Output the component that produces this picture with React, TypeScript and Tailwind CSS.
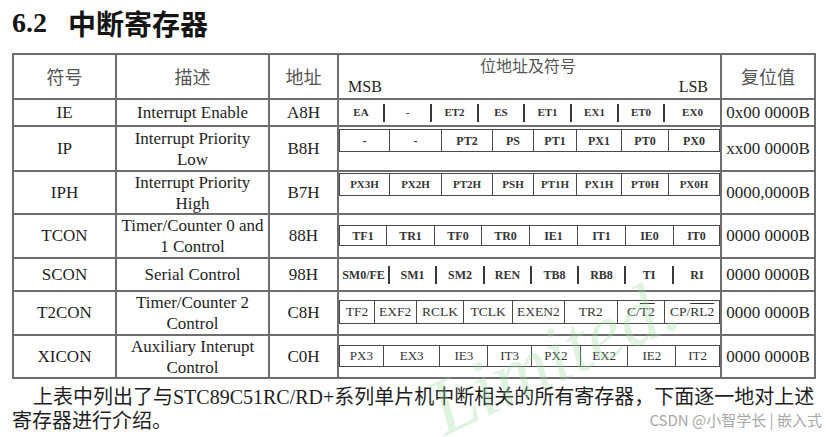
import React from 'react';

const serif = "font-['Liberation_Serif','Noto_Sans_CJK_SC',serif]";
const cjk = "font-['Noto_Sans_CJK_SC',sans-serif]";

type Bit = [React.ReactNode, number];

interface RegRow {
  sym: string;
  desc: string[];
  addr: string;
  reset: string;
  kind: 'bar' | 'box';
  bits: Bit[];
  text: string;
  box?: string;
}

const rows: RegRow[] = [
  {
    sym: 'IE',
    desc: ['Interrupt Enable'],
    addr: 'A8H',
    reset: '0x00 0000B',
    kind: 'bar',
    text: 'text-[11px] font-bold',
    bits: [['EA', 44], ['-', 47], ['ET2', 47], ['ES', 46], ['ET1', 47], ['EX1', 47], ['ET0', 46], ['EX0', 57]],
  },
  {
    sym: 'IP',
    desc: ['Interrupt Priority', 'Low'],
    addr: 'B8H',
    reset: 'xx00 0000B',
    kind: 'box',
    box: 'mt-[2px] h-[23px]',
    text: 'text-[12px] font-bold',
    bits: [['-', 49], ['-', 52], ['PT2', 51], ['PS', 41], ['PT1', 43], ['PX1', 45], ['PT0', 47], ['PX0', 51]],
  },
  {
    sym: 'IPH',
    desc: ['Interrupt Priority', 'High'],
    addr: 'B7H',
    reset: '0000,0000B',
    kind: 'box',
    box: 'mt-[1px] h-[23px]',
    text: 'text-[11px] font-bold',
    bits: [['PX3H', 49], ['PX2H', 52], ['PT2H', 51], ['PSH', 41], ['PT1H', 43], ['PX1H', 45], ['PT0H', 47], ['PX0H', 51]],
  },
  {
    sym: 'TCON',
    desc: ['Timer/Counter 0 and', '1 Control'],
    addr: '88H',
    reset: '0000 0000B',
    kind: 'box',
    box: 'mt-[10px] h-[21px]',
    text: 'text-[12px] font-bold',
    bits: [['TF1', 46], ['TR1', 48], ['TF0', 47], ['TR0', 48], ['IE1', 48], ['IT1', 48], ['IE0', 48], ['IT0', 46]],
  },
  {
    sym: 'SCON',
    desc: ['Serial Control'],
    addr: '98H',
    reset: '0000 0000B',
    kind: 'bar',
    text: 'text-[12px] font-bold',
    bits: [['SM0/FE', 49], ['SM1', 47], ['SM2', 48], ['REN', 47], ['TB8', 47], ['RB8', 47], ['TI', 48], ['RI', 48]],
  },
  {
    sym: 'T2CON',
    desc: ['Timer/Counter 2', 'Control'],
    addr: 'C8H',
    reset: '0000 0000B',
    kind: 'box',
    box: 'mt-[8px] h-[24px]',
    text: 'text-[13.5px]',
    bits: [
      ['TF2', 34],
      ['EXF2', 42],
      ['RCLK', 48],
      ['TCLK', 49],
      ['EXEN2', 52],
      ['TR2', 53],
      [<span>C/<span className="overline">T2</span></span>, 48],
      [<span>CP/<span className="overline">RL2</span></span>, 55],
    ],
  },
  {
    sym: 'XICON',
    desc: ['Auxiliary Interupt', 'Control'],
    addr: 'C0H',
    reset: '0000 0000B',
    kind: 'box',
    box: 'mt-[9px] h-[22px]',
    text: 'text-[13px]',
    bits: [['PX3', 43], ['EX3', 57], ['IE3', 48], ['IT3', 44], ['PX2', 49], ['EX2', 48], ['IE2', 48], ['IT2', 44]],
  },
];

function BitCells({ row }: { row: RegRow }) {
  if (row.kind === 'bar') {
    return (
      <div className={`flex h-full items-center text-[#333] ${row.text}`}>
        {row.bits.map(([label, w], i) => (
          <div key={i} className="flex h-full items-center" style={{ width: w }}>
            {i > 0 && <div className="h-[18px] w-[2px] bg-[#3a3a3a]" />}
            <div className="flex-1 text-center">{label}</div>
          </div>
        ))}
      </div>
    );
  }
  return (
    <div className="flex h-full flex-col">
      <div className={`flex border border-[#4a4a4a] text-[#333] ${row.box} ${row.text}`}>
        {row.bits.map(([label, w], i) => (
          <div
            key={i}
            className={`flex items-center justify-center ${i > 0 ? 'border-l border-[#4a4a4a]' : ''}`}
            style={{ width: w }}
          >
            {label}
          </div>
        ))}
      </div>
    </div>
  );
}

export default function App() {
  return (
    <div className={`relative h-[437px] w-[828px] overflow-hidden bg-white text-[#1e1e1e] ${serif}`}>
      {/* title */}
      <div className="flex h-[53px] items-start pl-[12px] pt-[9px] leading-[28px] text-[#151515]">
        <span className="text-[28px] font-bold">6.2</span>
        <span className={`ml-[21px] text-[28px] font-bold ${cjk}`}>中断寄存器</span>
      </div>

      {/* register table */}
      <div className="ml-[12px] grid w-[804px] grid-cols-[101px_151px_67px_381px_92px] grid-rows-[43px_25px_43px_41px_42px_31px_42px_41px] gap-[2px] bg-[#6e6e6e] p-[2px]">
        <div className={`flex items-center justify-center bg-white text-[18px] text-[#555] ${cjk}`}>符号</div>
        <div className={`flex items-center justify-center bg-white text-[18px] text-[#555] ${cjk}`}>描述</div>
        <div className={`flex items-center justify-center bg-white text-[18px] text-[#555] ${cjk}`}>地址</div>
        <div className="flex flex-col justify-between bg-white pb-[1px] pl-[9px] pr-[12px]">
          <div className={`text-center text-[16px] leading-[20px] text-[#555] ${cjk}`}>位地址及符号</div>
          <div className="flex justify-between text-[16px] leading-[20px]">
            <span>MSB</span>
            <span>LSB</span>
          </div>
        </div>
        <div className={`flex items-center justify-center bg-white text-[18px] text-[#555] ${cjk}`}>复位值</div>

        {rows.map((r) => (
          <React.Fragment key={r.sym}>
            <div className="flex items-center justify-center bg-white text-[17px]">{r.sym}</div>
            <div className="flex flex-col items-center justify-center bg-white text-[17px] leading-[21px]">
              {r.desc.map((d) => (
                <span key={d} className="whitespace-nowrap">{d}</span>
              ))}
            </div>
            <div className="flex items-center justify-center bg-white text-[17px]">{r.addr}</div>
            <div className="bg-white">
              <BitCells row={r} />
            </div>
            <div className="flex items-center justify-center whitespace-nowrap bg-white text-[17px]">{r.reset}</div>
          </React.Fragment>
        ))}
      </div>

      {/* paragraph */}
      <p className="mt-[6px] whitespace-nowrap pl-[12px] text-[20px] leading-[24px] text-[#1e1e1e]">
        <span className="pl-[21px]">上表中列出了与STC89C51RC/RD+系列单片机中断相关的所有寄存器，下面逐一地对上述</span>
        <br />
        寄存器进行介绍。
      </p>

      {/* watermarks */}
      <span className="pointer-events-none absolute left-[450px] top-[368px] origin-bottom-left -rotate-[25deg] text-[80px] italic leading-[80px] text-[#9ad89a] opacity-30">
        Limited.
      </span>
      <span className={`absolute right-[6px] top-[410px] text-[15px] leading-[20px] text-[#a8a8a8] ${cjk}`}>
        CSDN @小智学长 | 嵌入式
      </span>
    </div>
  );
}
